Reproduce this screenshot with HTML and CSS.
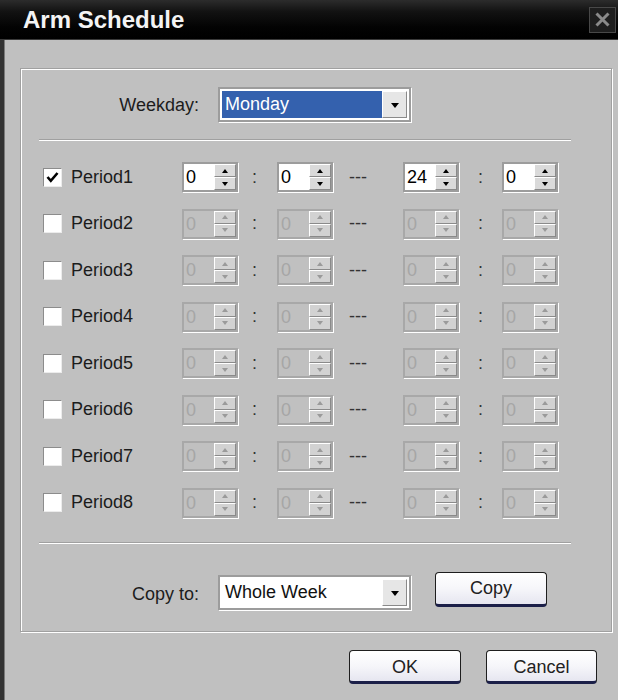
FILE: index.html
```html
<!DOCTYPE html>
<html>
<head>
<meta charset="utf-8">
<title>Arm Schedule</title>
<link rel="stylesheet" href="styles.css">
</head>
<body>
<div class="window">
  <div class="titlebar">
    <span class="title">Arm Schedule</span>
    <span class="close"><svg width="17" height="15" viewBox="0 0 17 15"><path d="M2.5 1.5 L14.5 13.5 M14.5 1.5 L2.5 13.5" stroke="#8a8a8a" stroke-width="3"/></svg></span>
  </div>
  <div class="body">
    <div class="group">
      <div class="field-row weekday-row">
        <span class="field-label">Weekday:</span>
        <div class="combo">
          <span class="combo-text selected">Monday</span>
          <span class="combo-btn"><i class="tri"></i></span>
        </div>
      </div>
      <div class="sep sep1"></div>
      <div class="periods">
        <div class="period">
          <span class="check"><svg width="17" height="17" viewBox="0 0 17 17"><path d="M3.5 8 L6.8 11.8 L13.5 4" fill="none" stroke="#000" stroke-width="2.6"/></svg></span>
          <span class="plabel">Period1</span>
          <div class="spin"><span class="spin-val">0</span><span class="spin-btns"><span class="sb"><i class="up"></i></span><span class="sb"><i class="down"></i></span></span></div>
          <span class="colon c1">:</span>
          <div class="spin"><span class="spin-val">0</span><span class="spin-btns"><span class="sb"><i class="up"></i></span><span class="sb"><i class="down"></i></span></span></div>
          <span class="dash">---</span>
          <div class="spin"><span class="spin-val">24</span><span class="spin-btns"><span class="sb"><i class="up"></i></span><span class="sb"><i class="down"></i></span></span></div>
          <span class="colon c2">:</span>
          <div class="spin"><span class="spin-val">0</span><span class="spin-btns"><span class="sb"><i class="up"></i></span><span class="sb"><i class="down"></i></span></span></div>
        </div>
        <div class="period off">
          <span class="check"></span>
          <span class="plabel">Period2</span>
          <div class="spin"><span class="spin-val">0</span><span class="spin-btns"><span class="sb"><i class="up"></i></span><span class="sb"><i class="down"></i></span></span></div>
          <span class="colon c1">:</span>
          <div class="spin"><span class="spin-val">0</span><span class="spin-btns"><span class="sb"><i class="up"></i></span><span class="sb"><i class="down"></i></span></span></div>
          <span class="dash">---</span>
          <div class="spin"><span class="spin-val">0</span><span class="spin-btns"><span class="sb"><i class="up"></i></span><span class="sb"><i class="down"></i></span></span></div>
          <span class="colon c2">:</span>
          <div class="spin"><span class="spin-val">0</span><span class="spin-btns"><span class="sb"><i class="up"></i></span><span class="sb"><i class="down"></i></span></span></div>
        </div>
        <div class="period off">
          <span class="check"></span>
          <span class="plabel">Period3</span>
          <div class="spin"><span class="spin-val">0</span><span class="spin-btns"><span class="sb"><i class="up"></i></span><span class="sb"><i class="down"></i></span></span></div>
          <span class="colon c1">:</span>
          <div class="spin"><span class="spin-val">0</span><span class="spin-btns"><span class="sb"><i class="up"></i></span><span class="sb"><i class="down"></i></span></span></div>
          <span class="dash">---</span>
          <div class="spin"><span class="spin-val">0</span><span class="spin-btns"><span class="sb"><i class="up"></i></span><span class="sb"><i class="down"></i></span></span></div>
          <span class="colon c2">:</span>
          <div class="spin"><span class="spin-val">0</span><span class="spin-btns"><span class="sb"><i class="up"></i></span><span class="sb"><i class="down"></i></span></span></div>
        </div>
        <div class="period off">
          <span class="check"></span>
          <span class="plabel">Period4</span>
          <div class="spin"><span class="spin-val">0</span><span class="spin-btns"><span class="sb"><i class="up"></i></span><span class="sb"><i class="down"></i></span></span></div>
          <span class="colon c1">:</span>
          <div class="spin"><span class="spin-val">0</span><span class="spin-btns"><span class="sb"><i class="up"></i></span><span class="sb"><i class="down"></i></span></span></div>
          <span class="dash">---</span>
          <div class="spin"><span class="spin-val">0</span><span class="spin-btns"><span class="sb"><i class="up"></i></span><span class="sb"><i class="down"></i></span></span></div>
          <span class="colon c2">:</span>
          <div class="spin"><span class="spin-val">0</span><span class="spin-btns"><span class="sb"><i class="up"></i></span><span class="sb"><i class="down"></i></span></span></div>
        </div>
        <div class="period off">
          <span class="check"></span>
          <span class="plabel">Period5</span>
          <div class="spin"><span class="spin-val">0</span><span class="spin-btns"><span class="sb"><i class="up"></i></span><span class="sb"><i class="down"></i></span></span></div>
          <span class="colon c1">:</span>
          <div class="spin"><span class="spin-val">0</span><span class="spin-btns"><span class="sb"><i class="up"></i></span><span class="sb"><i class="down"></i></span></span></div>
          <span class="dash">---</span>
          <div class="spin"><span class="spin-val">0</span><span class="spin-btns"><span class="sb"><i class="up"></i></span><span class="sb"><i class="down"></i></span></span></div>
          <span class="colon c2">:</span>
          <div class="spin"><span class="spin-val">0</span><span class="spin-btns"><span class="sb"><i class="up"></i></span><span class="sb"><i class="down"></i></span></span></div>
        </div>
        <div class="period off">
          <span class="check"></span>
          <span class="plabel">Period6</span>
          <div class="spin"><span class="spin-val">0</span><span class="spin-btns"><span class="sb"><i class="up"></i></span><span class="sb"><i class="down"></i></span></span></div>
          <span class="colon c1">:</span>
          <div class="spin"><span class="spin-val">0</span><span class="spin-btns"><span class="sb"><i class="up"></i></span><span class="sb"><i class="down"></i></span></span></div>
          <span class="dash">---</span>
          <div class="spin"><span class="spin-val">0</span><span class="spin-btns"><span class="sb"><i class="up"></i></span><span class="sb"><i class="down"></i></span></span></div>
          <span class="colon c2">:</span>
          <div class="spin"><span class="spin-val">0</span><span class="spin-btns"><span class="sb"><i class="up"></i></span><span class="sb"><i class="down"></i></span></span></div>
        </div>
        <div class="period off">
          <span class="check"></span>
          <span class="plabel">Period7</span>
          <div class="spin"><span class="spin-val">0</span><span class="spin-btns"><span class="sb"><i class="up"></i></span><span class="sb"><i class="down"></i></span></span></div>
          <span class="colon c1">:</span>
          <div class="spin"><span class="spin-val">0</span><span class="spin-btns"><span class="sb"><i class="up"></i></span><span class="sb"><i class="down"></i></span></span></div>
          <span class="dash">---</span>
          <div class="spin"><span class="spin-val">0</span><span class="spin-btns"><span class="sb"><i class="up"></i></span><span class="sb"><i class="down"></i></span></span></div>
          <span class="colon c2">:</span>
          <div class="spin"><span class="spin-val">0</span><span class="spin-btns"><span class="sb"><i class="up"></i></span><span class="sb"><i class="down"></i></span></span></div>
        </div>
        <div class="period off">
          <span class="check"></span>
          <span class="plabel">Period8</span>
          <div class="spin"><span class="spin-val">0</span><span class="spin-btns"><span class="sb"><i class="up"></i></span><span class="sb"><i class="down"></i></span></span></div>
          <span class="colon c1">:</span>
          <div class="spin"><span class="spin-val">0</span><span class="spin-btns"><span class="sb"><i class="up"></i></span><span class="sb"><i class="down"></i></span></span></div>
          <span class="dash">---</span>
          <div class="spin"><span class="spin-val">0</span><span class="spin-btns"><span class="sb"><i class="up"></i></span><span class="sb"><i class="down"></i></span></span></div>
          <span class="colon c2">:</span>
          <div class="spin"><span class="spin-val">0</span><span class="spin-btns"><span class="sb"><i class="up"></i></span><span class="sb"><i class="down"></i></span></span></div>
        </div>
      </div>
      <div class="sep sep2"></div>
      <div class="field-row copy-row">
        <span class="field-label">Copy to:</span>
        <div class="combo">
          <span class="combo-text">Whole Week</span>
          <span class="combo-btn"><i class="tri"></i></span>
        </div>
        <button class="btn btn-copy">Copy</button>
      </div>
    </div>
    <div class="footer">
      <button class="btn btn-ok">OK</button>
      <button class="btn btn-cancel">Cancel</button>
    </div>
  </div>
</div>
</body>
</html>
```

FILE: styles.css
```css
* { box-sizing: border-box; }
html, body { margin: 0; padding: 0; }
body {
  width: 618px;
  height: 700px;
  overflow: hidden;
  background: #c0c0c0;
  font-family: "Liberation Sans", Arial, sans-serif;
  font-size: 18px;
  color: #1c1c1c;
}
.window { width: 618px; height: 700px; display: flex; flex-direction: column; }

.titlebar {
  height: 40px;
  flex: none;
  display: flex;
  align-items: center;
  justify-content: space-between;
  padding: 0 2px 0 23px;
  background: linear-gradient(#2c2c2c 0%, #121212 30%, #030303 70%, #000 100%);
  border-bottom: 1px solid #3a3a3a;
}
.title {
  color: #f4f4f4;
  font-size: 24px;
  font-weight: bold;
  line-height: 40px;
}
.close {
  width: 27px;
  height: 26px;
  display: flex;
  align-items: center;
  justify-content: center;
  background: #1e1e1e;
  border: 1px solid #484848;
}

.body {
  flex: 1;
  border-left: 4px solid #333;
  box-shadow: inset 1px 0 0 #7a7a7a;
  padding: 28px 6px 0 16px;
}

.group {
  height: 564px;
  border: 1px solid #a0a0a0;
  box-shadow: inset 1px 1px 0 #fff, 1px 1px 0 #fff;
  display: flex;
  flex-direction: column;
}

.field-row { display: flex; align-items: center; }
.field-label {
  width: 179px;
  text-align: right;
  padding-right: 1px;
  margin-right: 18px;
}
.weekday-row { margin-top: 18px; }
.weekday-row .field-label { margin-top: 2px; }

.combo {
  width: 193px;
  height: 35px;
  border: 2px solid #9c9c9c;
  box-shadow: 1px 1px 0 #fff;
  background: #fff;
  display: flex;
  padding: 2px;
}
.combo-text {
  flex: 1;
  display: flex;
  align-items: center;
  padding-left: 3px;
  color: #111;
}
.combo-text.selected { background: #3461ae; color: #fff; }
.combo-btn {
  width: 25px;
  background: #e6e6e6;
  border-top: 1px solid #fff;
  border-left: 1px solid #fff;
  border-right: 1px solid #8a8a8a;
  border-bottom: 1px solid #8a8a8a;
  display: flex;
  align-items: center;
  justify-content: center;
}
.tri {
  width: 0; height: 0;
  border-left: 4px solid transparent;
  border-right: 4px solid transparent;
  border-top: 5px solid #000;
  margin-top: 2px;
}

.sep {
  margin-left: 18px;
  width: 532px;
  height: 2px;
  border-top: 1px solid #a0a0a0;
  border-bottom: 1px solid #fff;
  flex: none;
}
.sep1 { margin-top: 17px; }
.sep2 { margin-top: 16px; }

.periods { margin-top: 13px; }
.period {
  display: grid;
  grid-template-columns: 19px 120px 56px 39px 56px 70px 56px 43px 56px;
  align-items: center;
  height: 46.5px;
  padding-left: 22px;
}
.check {
  width: 19px;
  height: 19px;
  background: #fff;
  border: 1px solid;
  border-color: #8c8c8c #ececec #ececec #8c8c8c;
  display: flex;
  align-items: center;
  justify-content: center;
}
.plabel { padding-left: 9px; }
.colon, .dash { color: #333; }
.c1 { padding-left: 14px; }
.c2 { padding-left: 19px; }
.dash { padding-left: 16px; }

.spin {
  width: 56px;
  height: 30px;
  border: 2px solid #9c9c9c;
  box-shadow: 1px 1px 0 #fff;
  background: #fff;
  display: flex;
}
.spin-val {
  flex: 1;
  padding-left: 2px;
  line-height: 26px;
  color: #000;
}
.spin-btns {
  width: 22px;
  display: flex;
  flex-direction: column;
  background: #c0c0c0;
}
.sb {
  flex: 1;
  background: #dadada;
  border-top: 1px solid #fff;
  border-left: 1px solid #fff;
  border-right: 1px solid #8a8a8a;
  border-bottom: 1px solid #8a8a8a;
  display: flex;
  align-items: center;
  justify-content: center;
}
.up {
  width: 0; height: 0;
  border-left: 3px solid transparent;
  border-right: 3px solid transparent;
  border-bottom: 4px solid #000;
}
.down {
  width: 0; height: 0;
  border-left: 3px solid transparent;
  border-right: 3px solid transparent;
  border-top: 4px solid #000;
}
.off .spin { background: #c0c0c0; border-color: #a8a8a8; }
.off .spin-val { color: #a6a6a6; }
.off .sb { background: #d2d2d2; }
.off .up { border-bottom-color: #9a9a9a; }
.off .down { border-top-color: #9a9a9a; }

.copy-row { margin-top: 28px; align-items: flex-start; }
.copy-row .field-label { margin-top: 12px; }
.copy-row .combo { margin-top: 3px; }

.btn {
  font-family: "Liberation Sans", Arial, sans-serif;
  font-size: 18px;
  color: #222;
  height: 35px;
  padding: 0;
  border: 1px solid #1e1e1e;
  border-bottom: 3px solid #1b1f48;
  border-radius: 4px;
  background: linear-gradient(#ffffff 0%, #f6f6fa 50%, #e6e6f0 100%);
}
.btn-copy { width: 112px; margin-left: 24px; }

.footer {
  display: flex;
  justify-content: flex-end;
  gap: 25px;
  margin-top: 18px;
  padding-right: 15px;
}
.btn-ok { width: 112px; height: 34px; padding-top: 2px; }
.btn-cancel { width: 111px; height: 34px; padding-top: 2px; }
```
